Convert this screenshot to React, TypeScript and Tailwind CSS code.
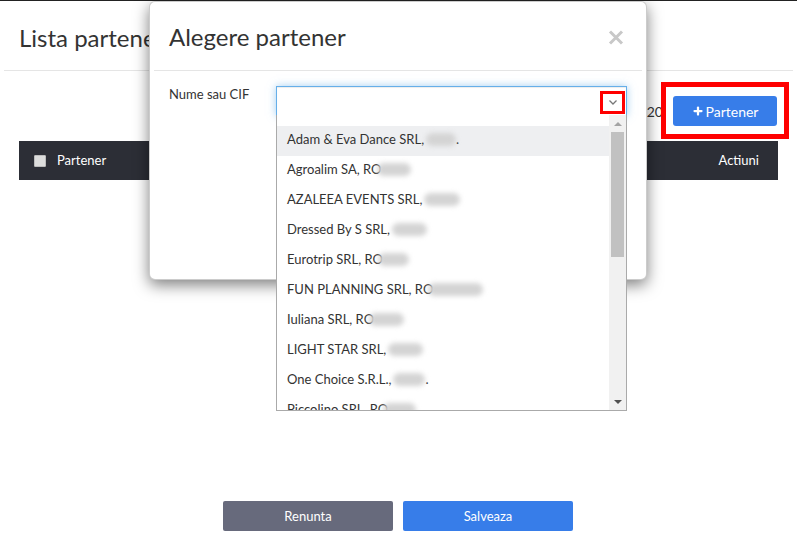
import { Plus } from "lucide-react";

type Option = { pre: string; blob: number; shift?: number; tail?: string };

const options: Option[] = [
  { pre: "Adam & Eva Dance SRL,", blob: 30, tail: "." },
  { pre: "Agroalim SA, RO", blob: 34, shift: -5 },
  { pre: "AZALEEA EVENTS SRL,", blob: 36 },
  { pre: "Dressed By S SRL,", blob: 35 },
  { pre: "Eurotrip SRL, RO", blob: 31, shift: -5 },
  { pre: "FUN PLANNING SRL, RO", blob: 55, shift: -5 },
  { pre: "Iuliana SRL, RO", blob: 35, shift: -5 },
  { pre: "LIGHT STAR SRL,", blob: 35 },
  { pre: "One Choice S.R.L.,", blob: 32, tail: "." },
  { pre: "Piccolino SRL, RO", blob: 33, shift: -5 },
];

const PartnerDropdown = () => (
  <div className="absolute -left-px top-full z-10 h-[296px] w-[351px] overflow-hidden border border-t-0 border-[#aaa] bg-white">
    <ul className="pt-[11px] pr-[17px]">
      {options.map((o, i) => (
        <li
          key={o.pre}
          className={`flex h-[30px] items-center whitespace-nowrap pb-[3px] pl-[10px] text-[13px] text-[#333] ${i === 0 ? "bg-[#eeeff1]" : ""}`}
        >
          <span>{o.pre}</span>
          <span
            className="inline-block h-[13px] rounded-full bg-[#d4d4d4] blur-[2.5px]"
            style={{ width: o.blob, marginLeft: o.shift ?? 2 }}
          />
          {o.tail && <span>{o.tail}</span>}
        </li>
      ))}
    </ul>
    {/* scrollbar */}
    <div className="absolute right-0 top-0 bottom-0 flex w-[17px] flex-col bg-[#f1f1f1]">
      <div className="flex h-[17px] items-center justify-center">
        <div className="h-0 w-0 border-x-[4px] border-b-[4px] border-x-transparent border-b-[#a3a3a3]" />
      </div>
      <div className="mx-[2px] h-[125px] bg-[#c1c1c1]" />
      <div className="mt-auto flex h-[17px] items-center justify-center">
        <div className="h-0 w-0 border-x-[4px] border-t-[4px] border-x-transparent border-t-[#505050]" />
      </div>
    </div>
  </div>
);

const ChooseModal = () => (
  <div className="absolute left-[149px] top-[1px] z-20 h-[279px] w-[498px] rounded-[6px] border border-black/20 bg-white shadow-[0_5px_15px_rgba(0,0,0,0.5)]">
    <div className="flex h-[68px] items-center justify-between pl-[19px] pr-[22px]">
      <h4 className="pt-[2px] text-[24px] leading-none text-[#333]">Alegere partener</h4>
      <svg width="16" height="15" viewBox="0 0 16 15" className="mt-[2px]">
        <path d="M2 1.5 L14 13.5 M14 1.5 L2 13.5" stroke="#c8c8c8" strokeWidth="3" />
      </svg>
    </div>
    <div className="mx-[4px] h-px bg-[#e5e5e5]" />
    <div className="flex pl-[19px] pt-[15px]">
      <label className="-mt-[2px] w-[107px] text-[13px] leading-[20px] text-[#333]">Nume sau CIF</label>
      <div className="relative h-[30px] w-[351px] border border-[#66afe9] bg-white shadow-[inset_0_1px_1px_rgba(0,0,0,0.075),0_0_8px_rgba(102,175,233,0.6)]">
        <div className="absolute left-[323px] top-[4px] flex h-[23px] w-[25px] items-center justify-center border-[3px] border-[#f00]">
          <svg width="8" height="5" viewBox="0 0 8 5">
            <path d="M0.5 0.5 L4 4 L7.5 0.5" stroke="#777" strokeWidth="1.3" fill="none" />
          </svg>
        </div>
        <PartnerDropdown />
      </div>
    </div>
  </div>
);

export default function App() {
  return (
    <div className="relative flex h-[546px] w-full flex-col overflow-hidden bg-white font-['Lato','Liberation_Sans',sans-serif] text-[#333]">
      <div className="h-px bg-[#222]" />

      {/* Page header */}
      <div className="flex h-[69px] items-center px-[19px]">
        <h2 className="pt-[4px] text-[24px] leading-none">Lista parteneri</h2>
      </div>
      <div className="mx-[4px] h-px bg-[#e5e5e5]" />

      {/* Toolbar */}
      <div className="mt-[25px] flex items-center justify-end gap-[10px] pr-[20px]">
        <span className="text-[14px]">Afiseaza 1 - 20</span>
        <div className="relative">
          <button className="flex h-[30px] w-[104px] items-center justify-center gap-[2px] rounded-[3px] bg-[#377de9] text-[14px] text-white">
            <Plus size={12} strokeWidth={4.5} />
            Partener
          </button>
          <div className="absolute -left-[12px] -top-[14px] h-[57px] w-[128px] border-[5px] border-[#f00]" />
        </div>
      </div>

      {/* Table header */}
      <div className="mx-[19px] mt-[15px] flex h-[39px] items-center justify-between bg-[#2c2e36] px-[15px] pr-[19px] text-[13px] text-white">
        <div className="flex items-center gap-[11px]">
          <span className="h-[12px] w-[12px] rounded-[1px] border border-[#bbb] bg-[#dcdcdc]" />
          <span>Partener</span>
        </div>
        <span>Actiuni</span>
      </div>

      {/* Footer buttons */}
      <div className="mb-[15px] mt-auto flex justify-center gap-[10px] pr-px">
        <button className="h-[30px] w-[170px] rounded-[2px] bg-[#676a7c] pt-px text-[13px] text-white">Renunta</button>
        <button className="h-[30px] w-[170px] rounded-[2px] bg-[#377de9] pt-px text-[13px] text-white">Salveaza</button>
      </div>

      <ChooseModal />
    </div>
  );
}
